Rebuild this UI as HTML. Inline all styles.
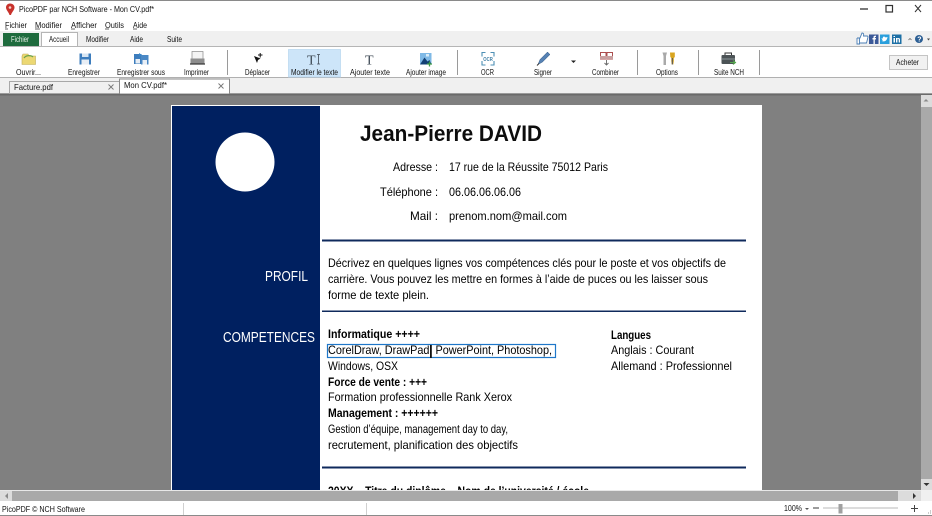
<!DOCTYPE html>
<html lang="fr"><head><meta charset="utf-8"><title>PicoPDF</title>
<style>
html,body{margin:0;padding:0;width:932px;height:516px;overflow:hidden;background:#fff}
svg{display:block;filter:blur(.3px)}
text{font-family:"Liberation Sans",sans-serif;white-space:pre}
.u{font-size:7.8px;fill:#111}
.d{font-size:12px;fill:#000}
.b{font-size:12px;fill:#000;font-weight:bold}
</style></head><body>
<svg width="932" height="516" viewBox="0 0 932 516" xmlns="http://www.w3.org/2000/svg">
<rect width="932" height="516" fill="#fff"/>
<rect width="932" height="1" fill="#8a8a8a"/>
<!-- title -->
<path d="M10 3.500c3 0 4.500 2 4.500 4 0 2.500-3 5-3.500 7.500h-1.500c-.5-2.500-3.500-5-3.500-7.500 0-2 1.500-4 4-4z" fill="#c8322c"/>
<circle cx="10" cy="7.500" r="1.300" fill="#f3d3c8"/>
<text class="u" x="19" y="12" textLength="135" lengthAdjust="spacingAndGlyphs" style="font-size:8.500px">PicoPDF par NCH Software - Mon CV.pdf*</text>
<path d="M860 9h8" stroke="#222" stroke-width="1.200"/>
<rect x="886" y="5.500" width="6.500" height="6.500" fill="none" stroke="#333" stroke-width="1.200"/>
<path d="M915 5l6 7M921 5l-6 7" stroke="#333" stroke-width="1"/>
<!-- menu -->
<text class="u" x="5" y="28" textLength="22" lengthAdjust="spacingAndGlyphs">Fichier</text>
<text class="u" x="35" y="28" textLength="27" lengthAdjust="spacingAndGlyphs">Modifier</text>
<text class="u" x="71" y="28" textLength="26" lengthAdjust="spacingAndGlyphs">Afficher</text>
<text class="u" x="105" y="28" textLength="19" lengthAdjust="spacingAndGlyphs">Outils</text>
<text class="u" x="133" y="28" textLength="14" lengthAdjust="spacingAndGlyphs">Aide</text>
<path d="M5 29h3M35 29h5M71 29h4M105 29h4M133 29h4" stroke="#333" stroke-width=".7"/>
<!-- tab strip -->
<rect y="31" width="932" height="15" fill="#f0f0f0"/>
<rect x="3" y="33" width="36" height="13" fill="#1e6b3d"/>
<text x="11" y="42" textLength="18" lengthAdjust="spacingAndGlyphs" style="font-size:7.800px;fill:#e8f2ea">Fichier</text>
<rect x="41.500" y="32.500" width="36" height="14" fill="#fff" stroke="#b5b5b5"/>
<text class="u" x="49" y="42" textLength="20" lengthAdjust="spacingAndGlyphs">Accueil</text>
<text class="u" x="86" y="42" textLength="23" lengthAdjust="spacingAndGlyphs">Modifier</text>
<text class="u" x="130" y="42" textLength="13" lengthAdjust="spacingAndGlyphs">Aide</text>
<text class="u" x="167" y="42" textLength="15" lengthAdjust="spacingAndGlyphs">Suite</text>
<path d="M0 46.500h41M78 46.500h854" stroke="#b5b5b5"/>
<!-- social -->
<g>
<path d="M857 38h3l2-5c1.500 0 2 1 1.500 3h3.500c.8 0 1 .6 1 1l-1.500 6h-7v-5M857 38v6h3" fill="#fff" stroke="#4a7eb5" stroke-width=".9"/>
<rect x="869" y="34.500" width="9.500" height="9.500" fill="#3b5998"/><path d="M873.500 44v-4.500h-1v-1.500h1v-1c0-1 1-1.500 2.500-1.300v1.300c-1 0-1.200.2-1.200 1h1.200l-.2 1.500h-1V44z" fill="#fff"/>
<rect x="880" y="34.500" width="9.500" height="9.500" fill="#2a9fdc"/><path d="M881.500 41c2.500 1 5.500.3 6-4-1.500.5-3 .5-3-.5-1.500 0-2 1-1.500 2-1 0-1.500-.5-1.500-.5.300 1.500 1 2 1.500 2.500z" fill="#fff"/>
<rect x="892" y="34.500" width="9.500" height="9.500" fill="#1d6fa5"/><path d="M893.500 38h1.500v4.500h-1.500zM893.500 36h1.500v1h-1.500zM896 38h1.500v.5c1-1 2.500-.5 2.500 1v3h-1.300v-2.800c0-.9-1.300-.9-1.300 0v2.800H896z" fill="#fff"/>
<path d="M908.500 40l1.500-1.500 1.500 1.500" fill="none" stroke="#555" stroke-width=".7"/>
<circle cx="919" cy="39" r="4" fill="#2d5f94"/><text x="917.300" y="41.500" style="font-size:7px;font-weight:bold;fill:#fff">?</text>
<path d="M927 38.500h3l-1.500 2z" fill="#444"/>
</g>
<!-- ribbon -->
<rect y="47" width="932" height="31" fill="#fff"/>
<path d="M0 77.500h932" stroke="#b0b0b0"/>
<rect x="288.500" y="49.500" width="52" height="27.500" fill="#cde5f9" stroke="#bcd9f0" stroke-width=".8"/>
<path d="M227.500 50v25M457.500 50v25M637.500 50v25M698.500 50v25M759.500 50v25" stroke="#9a9a9a"/>
<!-- icons -->
<path d="M22 56l1-2h5l1 2h6.500v8.500H22z" fill="#ecd873" stroke="#bfae5a" stroke-width=".6"/><path d="M24 58c2-3 7-3 9-1" fill="none" stroke="#6ba34b" stroke-width="1.200"/>
<rect x="79.500" y="53.500" width="11.500" height="11" fill="#3d7dbd"/><rect x="82" y="53.500" width="6.500" height="3.500" fill="#d8e6f3"/><rect x="81.500" y="59.500" width="7.500" height="5" fill="#e8eef5"/>
<rect x="134" y="54" width="7.500" height="10" fill="#3d7dbd"/><rect x="141" y="55" width="7.500" height="9.500" fill="#4a88c5"/><rect x="135.500" y="59" width="4.500" height="4.500" fill="#e8eef5"/><rect x="142.500" y="60" width="4.500" height="4.500" fill="#e8eef5"/><path d="M139 53l3 2-3 2" fill="#3a86c8"/>
<rect x="192" y="51.500" width="11" height="7.500" fill="#f4f4f4" stroke="#888" stroke-width=".7"/><rect x="190.500" y="58.500" width="14" height="5" fill="#8d8d8d"/><path d="M190 64h15" stroke="#333" stroke-width="1.200"/>
<path d="M254 56l6.500 2.500-2.500 1.500-1 3z" fill="#111"/><path d="M258 55h4.500M260.200 53v4.500" stroke="#111" stroke-width="1"/>
<text x="307" y="64.500" style="font-family:'Liberation Serif',serif;font-size:14px;fill:#3f4a55">T</text>
<path d="M318.500 54.500v9.500M317 54.500h3M317 64h3" stroke="#3f4a55" stroke-width=".8"/>
<text x="365" y="64.500" style="font-family:'Liberation Serif',serif;font-size:14px;fill:#3f4a55">T</text>
<rect x="420" y="53" width="11.500" height="11.500" fill="#7fb9e6"/><path d="M420 64.500l4.500-7 3 4 2-1.500 2 4.500z" fill="#123f73"/><rect x="426" y="54" width="3" height="2.500" fill="#d8ecf8"/><path d="M429.500 61.500v5M427 64h5" stroke="#3d9a46" stroke-width="1.300"/>
<path d="M482 56.500v-4h3.500M490.500 52.500h3.500v4M482 61v4h3.500M490.500 65h3.500v-4" fill="none" stroke="#4d8fb5" stroke-width="1.100"/>
<text x="483.300" y="61" textLength="9.500" lengthAdjust="spacingAndGlyphs" style="font-size:5.500px;font-weight:bold;fill:#3e7ea5">OCR</text>
<path d="M538 64.500l2-5 7.500-7.500 2.500 2.500-7.500 7.500z" fill="#5682b4" stroke="#3d5f88" stroke-width=".5"/><path d="M537 65.500l2-2" stroke="#333"/><path d="M571 60.500h5l-2.500 2.500z" fill="#222"/>
<g fill="#fff" stroke="#a33c3c" stroke-width=".9"><rect x="600.500" y="52.500" width="5.500" height="6.500"/><rect x="607" y="52.500" width="5.500" height="6.500"/></g><rect x="600" y="56" width="13" height="3" fill="#c8a0a0"/><path d="M606.500 60v5M604.500 63l2 2 2-2" fill="none" stroke="#666" stroke-width=".9"/>
<path d="M662.500 52.500h4.500l-1 3.500v9h-2.500v-9z" fill="#a9a9a9"/><path d="M670 52.500h4.800v4.500l-1 1v3l-.5 3.500h-1.500l-.5-3.500v-3l-1-1z" fill="#d9a520"/><path d="M672.300 58v6.500" stroke="#555" stroke-width="1.100"/>
<rect x="721.500" y="55" width="13.500" height="9" rx="1" fill="#4c5356"/><path d="M725 55v-2h6.500v2" fill="none" stroke="#333"/><path d="M722 59h13" stroke="#8a9598"/><path d="M730 62.500h5M733 60.500l2.500 2-2.500 2" fill="none" stroke="#54a64c" stroke-width="1.100"/>
<!-- ribbon labels -->
<g>
<text class="u" x="16" y="75" textLength="25" lengthAdjust="spacingAndGlyphs">Ouvrir...</text>
<text class="u" x="68" y="75" textLength="32" lengthAdjust="spacingAndGlyphs">Enregistrer</text>
<text class="u" x="117" y="75" textLength="48" lengthAdjust="spacingAndGlyphs">Enregistrer sous</text>
<text class="u" x="184" y="75" textLength="25" lengthAdjust="spacingAndGlyphs">Imprimer</text>
<text class="u" x="245" y="75" textLength="25" lengthAdjust="spacingAndGlyphs">Déplacer</text>
<text class="u" x="291" y="75" textLength="47" lengthAdjust="spacingAndGlyphs">Modifier le texte</text>
<text class="u" x="350" y="75" textLength="40" lengthAdjust="spacingAndGlyphs">Ajouter texte</text>
<text class="u" x="406" y="75" textLength="40" lengthAdjust="spacingAndGlyphs">Ajouter image</text>
<text class="u" x="481" y="75" textLength="13" lengthAdjust="spacingAndGlyphs">OCR</text>
<text class="u" x="534" y="75" textLength="18" lengthAdjust="spacingAndGlyphs">Signer</text>
<text class="u" x="592" y="75" textLength="27" lengthAdjust="spacingAndGlyphs">Combiner</text>
<text class="u" x="656" y="75" textLength="22" lengthAdjust="spacingAndGlyphs">Options</text>
<text class="u" x="714" y="75" textLength="30" lengthAdjust="spacingAndGlyphs">Suite NCH</text>
</g>
<rect x="889.500" y="55.500" width="38" height="14" fill="#f1f1f1" stroke="#c4c4c4"/>
<text class="u" x="896" y="65" textLength="23" lengthAdjust="spacingAndGlyphs">Acheter</text>
<!-- doc tabs -->
<rect y="78" width="932" height="17" fill="#f0f0f0"/>
<path d="M0 93.500h932" stroke="#9b9b9b"/>
<rect x="9.500" y="81.500" width="110" height="12" fill="#f0f0f0" stroke="#a8a8a8"/>
<text x="14" y="90" textLength="39" lengthAdjust="spacingAndGlyphs" style="font-size:8.500px;fill:#111">Facture.pdf</text>
<path d="M108.500 84.500l5 5M113.500 84.500l-5 5" stroke="#777" stroke-width=".9"/>
<rect x="119.500" y="79" width="110" height="15" fill="#fff" stroke="#8a8a8a"/>
<text x="124" y="88" textLength="43" lengthAdjust="spacingAndGlyphs" style="font-size:8.500px;fill:#111">Mon CV.pdf*</text>
<path d="M218.500 83.500l5 5M223.500 83.500l-5 5" stroke="#777" stroke-width=".9"/>
<!-- view -->
<rect x="0" y="95" width="921" height="395" fill="#808080"/>
<rect x="0" y="94" width="932" height="1.500" fill="#6a6a6a"/>
<rect x="171" y="105" width="591" height="385" fill="#fff"/>
<rect x="172" y="106" width="148" height="384" fill="#002060"/>
<circle cx="245" cy="162" r="29.500" fill="#fff"/>
<text x="265" y="281" textLength="43" lengthAdjust="spacingAndGlyphs" style="font-size:14.500px;fill:#fff">PROFIL</text>
<text x="223" y="342" textLength="92" lengthAdjust="spacingAndGlyphs" style="font-size:14.500px;fill:#fff">COMPETENCES</text>
<text x="360" y="141" textLength="182" lengthAdjust="spacingAndGlyphs" style="font-size:22px;font-weight:bold;fill:#0d0d0d">Jean-Pierre DAVID</text>
<text class="d" x="393" y="171" textLength="45" lengthAdjust="spacingAndGlyphs">Adresse :</text>
<text class="d" x="449" y="171" textLength="159" lengthAdjust="spacingAndGlyphs">17 rue de la Réussite 75012 Paris</text>
<text class="d" x="380" y="196" textLength="58" lengthAdjust="spacingAndGlyphs">Téléphone :</text>
<text class="d" x="449" y="196" textLength="72" lengthAdjust="spacingAndGlyphs">06.06.06.06.06</text>
<text class="d" x="410" y="220" textLength="28" lengthAdjust="spacingAndGlyphs">Mail :</text>
<text class="d" x="449" y="220" textLength="118" lengthAdjust="spacingAndGlyphs">prenom.nom@mail.com</text>
<rect x="322" y="239.500" width="424" height="2" fill="#0f2a5c"/>
<text class="d" x="328" y="267" textLength="398" lengthAdjust="spacingAndGlyphs">Décrivez en quelques lignes vos compétences clés pour le poste et vos objectifs de</text>
<text class="d" x="328" y="283" textLength="380" lengthAdjust="spacingAndGlyphs">carrière. Vous pouvez les mettre en formes à l’aide de puces ou les laisser sous</text>
<text class="d" x="328" y="299" textLength="101" lengthAdjust="spacingAndGlyphs">forme de texte plein.</text>
<rect x="322" y="310.500" width="424" height="1.500" fill="#0f2a5c"/>
<text class="b" x="328" y="338" textLength="92" lengthAdjust="spacingAndGlyphs">Informatique ++++</text>
<text class="d" x="328" y="354" textLength="224" lengthAdjust="spacingAndGlyphs">CorelDraw, DrawPad, PowerPoint, Photoshop,</text>
<rect x="327.500" y="344.500" width="228" height="13" fill="none" stroke="#1f77c9" stroke-width="1.200"/>
<rect x="430" y="345" width="1.800" height="13" fill="#111"/>
<text class="d" x="328" y="370" textLength="70" lengthAdjust="spacingAndGlyphs">Windows, OSX</text>
<text class="b" x="328" y="386" textLength="99" lengthAdjust="spacingAndGlyphs">Force de vente : +++</text>
<text class="d" x="328" y="401" textLength="184" lengthAdjust="spacingAndGlyphs">Formation professionnelle Rank Xerox</text>
<text class="b" x="328" y="417" textLength="110" lengthAdjust="spacingAndGlyphs">Management : ++++++</text>
<text class="d" x="328" y="433" textLength="180" lengthAdjust="spacingAndGlyphs">Gestion d’équipe, management day to day,</text>
<text class="d" x="328" y="449" textLength="190" lengthAdjust="spacingAndGlyphs">recrutement, planification des objectifs</text>
<text class="b" x="611" y="339" textLength="40" lengthAdjust="spacingAndGlyphs">Langues</text>
<text class="d" x="611" y="354" textLength="83" lengthAdjust="spacingAndGlyphs">Anglais : Courant</text>
<text class="d" x="611" y="370" textLength="121" lengthAdjust="spacingAndGlyphs">Allemand : Professionnel</text>
<rect x="322" y="466.500" width="424" height="2" fill="#0f2a5c"/>
<text class="b" x="328" y="495" textLength="261" lengthAdjust="spacingAndGlyphs">20XX    Titre du diplôme    Nom de l’université / école</text>
<!-- scrollbars -->
<rect x="921" y="95" width="11" height="395" fill="#a9a9a9"/>
<rect x="921" y="95" width="11" height="12" fill="#dcdcdc"/>
<rect x="921" y="479" width="11" height="11" fill="#dcdcdc"/>
<path d="M923.500 101.500l2.500-2.500 2.500 2.500z" fill="#8a8a8a"/>
<path d="M923.500 483h6l-3 3z" fill="#333"/>
<rect x="0" y="490" width="932" height="11.500" fill="#a9a9a9"/>
<rect x="0" y="490" width="932" height="1" fill="#e8e8e8"/>
<rect x="0" y="491" width="12" height="10.500" fill="#dcdcdc"/>
<rect x="898" y="491" width="23" height="10.500" fill="#dcdcdc"/>
<rect x="921" y="490" width="11" height="11.500" fill="#f0f0f0"/>
<path d="M8 493l-3 3 3 3z" fill="#8a8a8a"/>
<path d="M913 493l3 3-3 3z" fill="#333"/>
<!-- status -->
<rect y="501" width="932" height="15" fill="#fff"/>
<path d="M0 515.500h932" stroke="#8a8a8a"/>
<path d="M183.500 503v12M366.500 503v12" stroke="#d0d0d0"/>
<text class="u" x="2" y="512" textLength="83" lengthAdjust="spacingAndGlyphs" style="font-size:8.500px">PicoPDF © NCH Software</text>
<text class="u" x="784" y="511" textLength="18" lengthAdjust="spacingAndGlyphs">100%</text>
<path d="M805 508h4l-2 2z" fill="#555"/>
<path d="M813 508h6" stroke="#666" stroke-width="1.300"/>
<path d="M823 508h75" stroke="#c8c8c8" stroke-width="1.200"/>
<rect x="838.500" y="504" width="4" height="9.500" fill="#a0a0a0"/>
<path d="M911 508.500h7M914.500 505v7" stroke="#444" stroke-width="1"/>
<path d="M928 513h1M930 513h1M930 511h1" stroke="#999"/>
</svg>
</body></html>
